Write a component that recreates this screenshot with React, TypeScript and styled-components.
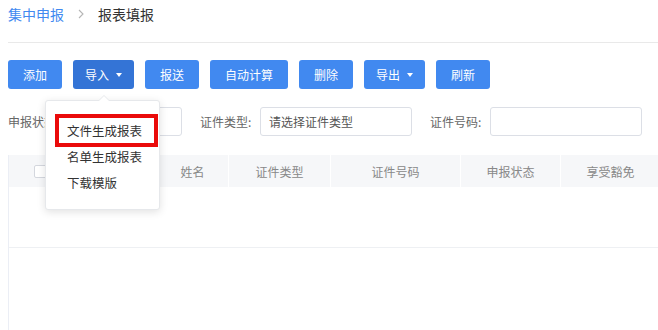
import styled, { createGlobalStyle } from "styled-components";

const Global = createGlobalStyle`
  html, body { margin: 0; padding: 0; background: #fff; overflow: hidden; }
  body { font-family: "Noto Sans CJK SC", "Noto Sans", sans-serif; color: #333; }
`;

const blue = "#4189f0";

const Page = styled.div`
  width: 658px; height: 330px;
  padding-left: 8px; box-sizing: border-box;
  position: relative; overflow: hidden;
`;

const Crumbs = styled.div`
  display: flex; align-items: center;
  height: 28px; font-size: 14px;
`;

const CrumbLink = styled.span`color: ${blue};`;
const CrumbSep = styled.svg`margin: 0 14px 0 14px; flex: none;`;
const CrumbCurrent = styled.span`color: #333;`;

const Divider = styled.div`
  height: 1px; background: #e9e9e9; margin-top: 14px;
`;

const Toolbar = styled.div`
  display: flex; gap: 11px; margin-top: 17px;
`;

const Btn = styled.button<{ $active?: boolean; $w: number }>`
  width: ${({ $w }) => $w}px; height: 29px;
  border: none; border-radius: 3px;
  background: ${({ $active }) => ($active ? "#3474d6" : blue)};
  color: #fff; font-family: inherit; font-size: 12px;
  display: flex; align-items: center; justify-content: center; gap: 7px;
  padding: 0;
`;

const Caret = styled.span`
  width: 0; height: 0;
  border-left: 3.5px solid transparent; border-right: 3.5px solid transparent;
  border-top: 4px solid #fff;
`;

const Filters = styled.div`
  display: flex; gap: 18px; margin-top: 18px; align-items: center;
`;

const Field = styled.div`
  display: flex; align-items: center;
`;

const Label = styled.span`
  width: 60px; font-size: 12px; color: #666; white-space: nowrap;
`;

const Input = styled.div<{ $w: number }>`
  width: ${({ $w }) => $w}px; height: 29px; box-sizing: border-box;
  border: 1px solid #dcdfe6; border-radius: 3px;
  font-size: 12px; color: #555; padding-left: 8px;
  display: flex; align-items: center;
`;

const Table = styled.div`
  margin-top: 19px; border-left: 1px solid #ebeef5;
  width: 660px; height: 200px;
`;

const Head = styled.div`
  display: grid;
  grid-template-columns: 63px 85px 72px 102px 130px 100px 100px;
  height: 32px; background: #f6f7f9;
`;

const HeadCell = styled.div`
  display: flex; align-items: center; justify-content: center;
  font-size: 12px; color: #888;
  border-right: 1px solid #fff;
`;

const Check = styled.span`
  width: 13px; height: 13px; box-sizing: border-box;
  border: 1px solid #d4d7de; border-radius: 2px; background: #fff;
`;

const Row = styled.div`
  height: 60px; border-bottom: 1px solid #eef0f3;
`;

const Menu = styled.div`
  position: absolute; left: 45px; top: 100px;
  width: 115px; height: 110px; box-sizing: border-box;
  background: #fff; border: 1px solid #e6e8eb; border-radius: 3px;
  box-shadow: 0 2px 8px rgba(0, 0, 0, 0.12);
  padding-top: 17px;

  &::before {
    content: ""; position: absolute; left: 52px; top: -6px;
    border-left: 6px solid transparent; border-right: 6px solid transparent;
    border-bottom: 6px solid #e6e8eb;
  }
  &::after {
    content: ""; position: absolute; left: 53px; top: -5px;
    border-left: 5px solid transparent; border-right: 5px solid transparent;
    border-bottom: 5px solid #fff;
  }
`;

const MenuItem = styled.div`
  height: 26px; line-height: 26px;
  padding-left: 21px; font-size: 12.5px; color: #333;
`;

const Highlight = styled.div`
  position: absolute; left: 9px; top: 13px;
  width: 103px; height: 33px; box-sizing: border-box;
  border: 4px solid #ea0a0a;
`;

const buttons: { label: string; w: number; drop?: boolean; active?: boolean }[] = [
  { label: "添加", w: 54 },
  { label: "导入", w: 61, drop: true, active: true },
  { label: "报送", w: 54 },
  { label: "自动计算", w: 78 },
  { label: "删除", w: 54 },
  { label: "导出", w: 61, drop: true },
  { label: "刷新", w: 54 },
];

// second column sits under the open menu, its title is not visible
const columns = ["", "", "姓名", "证件类型", "证件号码", "申报状态", "享受豁免"];

export default function App() {
  return (
    <Page>
      <Global />
      <Crumbs>
        <CrumbLink>集中申报</CrumbLink>
        <CrumbSep width="6" height="10" viewBox="0 0 6 10">
          <path d="M1 1l4 4-4 4" fill="none" stroke="#b5b5b5" strokeWidth="1.1" />
        </CrumbSep>
        <CrumbCurrent>报表填报</CrumbCurrent>
      </Crumbs>
      <Divider />
      <Toolbar>
        {buttons.map((b) => (
          <Btn key={b.label} $w={b.w} $active={b.active}>
            {b.label}
            {b.drop && <Caret />}
          </Btn>
        ))}
      </Toolbar>
      <Filters>
        <Field>
          <Label>申报状态:</Label>
          <Input $w={114} />
        </Field>
        <Field>
          <Label>证件类型:</Label>
          <Input $w={152}>请选择证件类型</Input>
        </Field>
        <Field>
          <Label>证件号码:</Label>
          <Input $w={152} />
        </Field>
      </Filters>
      <Table>
        <Head>
          {columns.map((c, i) => (
            <HeadCell key={i}>{i === 0 ? <Check /> : c}</HeadCell>
          ))}
        </Head>
        <Row />
      </Table>
      <Menu>
        <Highlight />
        <MenuItem>文件生成报表</MenuItem>
        <MenuItem>名单生成报表</MenuItem>
        <MenuItem>下载模版</MenuItem>
      </Menu>
    </Page>
  );
}
